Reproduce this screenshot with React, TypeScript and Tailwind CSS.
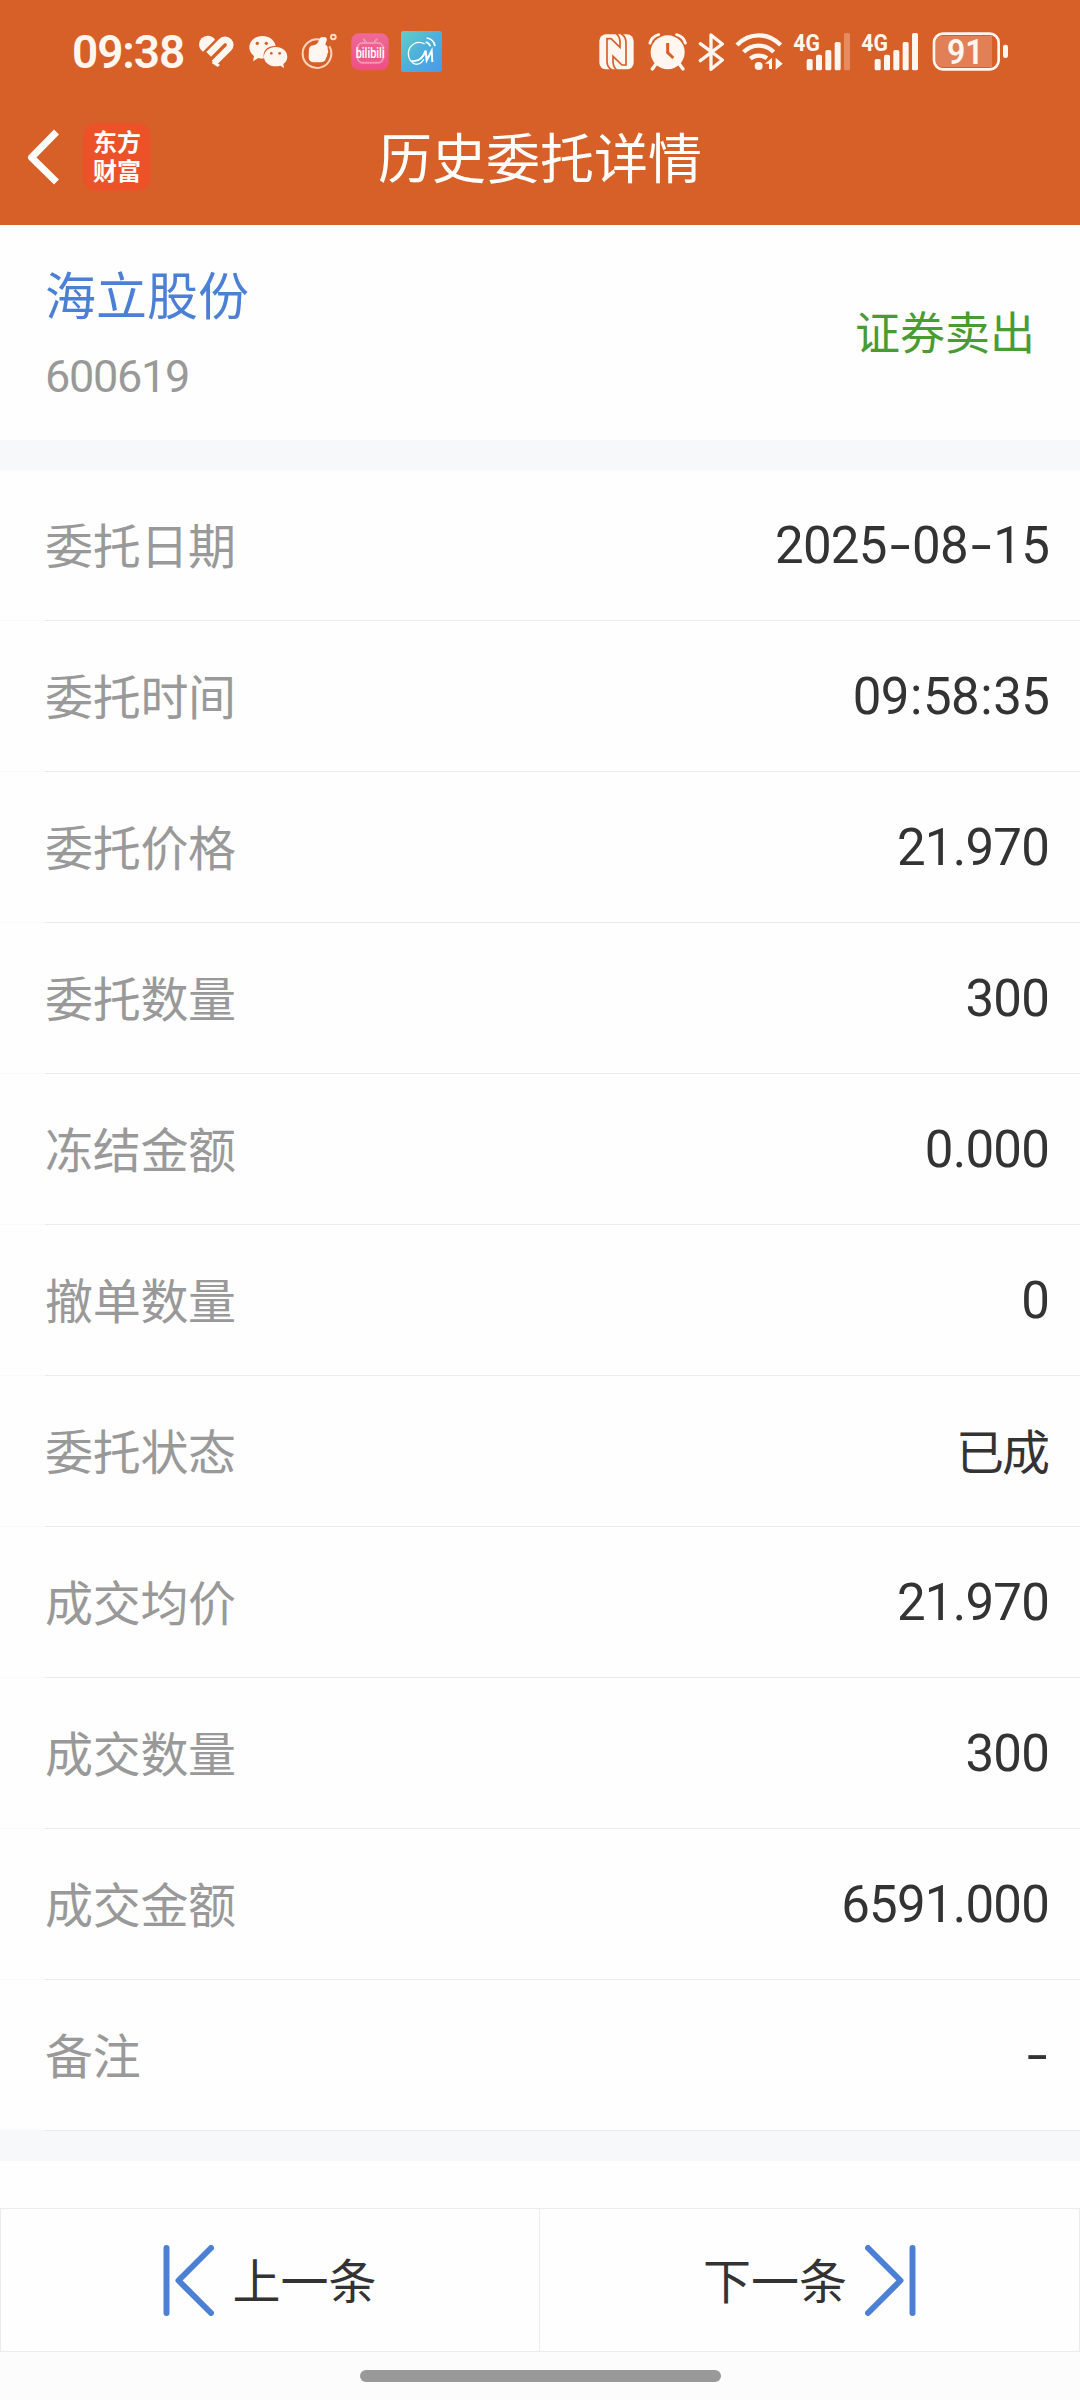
import React from "react";

const CREAM = "#fff6ef";

const HeartIcon = () => (
  <svg className="h-[34px] w-[38px]" viewBox="447 72 114 102" fill="none" stroke={CREAM}>
    <path d="M495 86A26 26 0 1 0 459 122Z" fill={CREAM} stroke="none" />
    <path d="M476 130L515.400 90.600A15 15 0 0 1 536.600 111.800L492 156" strokeWidth="20" />
    <path d="M485 156L492 149L510 162L503 168Z" fill={CREAM} stroke="none" />
  </svg>
);

const WechatIcon = () => (
  <svg className="h-[34px] w-[39px]" viewBox="598 73 117 102">
    <path d="M638 76C616 76 599 91 599 110C599 121 605 130 613 136L610 152L626 142C632 144 638 144 643 143C637 119 655 104 678 106C675 88 659 76 638 76Z" fill={CREAM} />
    <path d="M678 109C658 109 643 122 643 138C643 154 658 167 678 167C683 167 688 166 692 165L703 172L701 160C708 155 713 147 713 138C713 122 698 109 678 109Z" fill={CREAM} />
    <g fill="#d75f28"><circle cx="623" cy="98" r="5" /><circle cx="650" cy="98" r="5" /><circle cx="665" cy="128" r="4" /><circle cx="690" cy="128" r="4" /></g>
  </svg>
);

const ThumbIcon = () => (
  <svg className="h-[37px] w-[36px]" viewBox="754 70 108 111" fill="none">
    <path d="M812 90A43 43 0 1 0 839 110" stroke="#ffd5bd" strokeWidth="6" />
    <path d="M778 118Q780 108 792 107Q806 104 809 88Q812 80 827 83Q835 86 829 98L827 105Q836 109 834 118Q838 126 833 133Q834 141 829 145Q827 158 812 158H791Q777 156 777 142Z" fill={CREAM} />
    <circle cx="851" cy="82" r="7" stroke="#ffdcc8" strokeWidth="6" />
  </svg>
);

const BiliIcon = () => (
  <svg className="h-[38px] w-[38px] overflow-visible" viewBox="904 68 114 114">
    <defs>
      <linearGradient id="pink" x1="0" y1="0" x2="0" y2="1"><stop offset="0" stopColor="#ee6a97" /><stop offset="1" stopColor="#ef4f81" /></linearGradient>
    </defs>
    <rect x="905" y="69" width="112" height="111" rx="23" fill="url(#pink)" />
    <g fill="none" stroke="#f693b3" strokeWidth="6" strokeLinecap="round">
      <rect x="924" y="98" width="76" height="59" rx="14" />
      <path d="M942 87L950 97M981 87L973 97" />
    </g>
    <text x="918" y="142" fontSize="44" fontWeight="500" fill="#fff" textLength="87" lengthAdjust="spacingAndGlyphs" fontFamily="Roboto, sans-serif">bilibili</text>
  </svg>
);

const MLogo = () => (
  <svg className="h-[41px] w-[41px]" viewBox="1053 63 123 123" fill="none" stroke="#fff">
    <defs>
      <linearGradient id="aqua" x1="0" y1="0" x2="1" y2="1"><stop offset="0" stopColor="#63cfc3" /><stop offset=".5" stopColor="#4cb0dc" /><stop offset="1" stopColor="#4a99ea" /></linearGradient>
    </defs>
    <rect x="1053" y="63" width="123" height="123" rx="7" fill="url(#aqua)" stroke="none" />
    <path d="M1124 102C1103 90 1077 103 1075 129C1074 147 1085 160 1099 163" strokeWidth="4" />
    <path d="M1084 153C1106 156 1119 145 1127 122L1130 151L1145 122L1147 156" strokeWidth="6" />
    <path d="M1098 163C1110 163 1117 157 1121 148" strokeWidth="4" />
    <path d="M1127 96Q1138 99 1141 109M1130 84Q1151 87 1155 108" strokeWidth="5" />
  </svg>
);

const NfcIcon = () => (
  <svg className="h-[36px] w-[35px]" viewBox="58 71 105 108">
    <rect x="59" y="72" width="103" height="105" rx="20" fill={CREAM} />
    <g fill="none" stroke="#d75f28" strokeWidth="5">
      <path d="M97 179Q82 171 82 152V85H94L121 111V96Q121 80 110 70" />
      <path d="M124 70Q139 78 139 97V164H127L100 138V153Q100 169 111 179" />
    </g>
  </svg>
);

const AlarmIcon = () => (
  <svg className="h-[38px] w-[39px]" viewBox="204 67 117 114" fill="none" stroke={CREAM}>
    <circle cx="263" cy="125" r="51" fill={CREAM} stroke="none" />
    <path d="M228 160L217 175M298 160L309 175" strokeWidth="10" strokeLinecap="round" />
    <path d="M210 97Q215 78 236 72M316 97Q311 78 290 72" strokeWidth="9" strokeLinecap="round" />
    <path d="M263 97V126L280 142" stroke="#d75f28" strokeWidth="9" />
  </svg>
);

const BluetoothIcon = () => (
  <svg className="h-[38px] w-[27px]" viewBox="354 67 81 114" fill="none" stroke={CREAM} strokeWidth="10" strokeLinejoin="round" strokeLinecap="round">
    <path d="M361 99L427 148L393 176V73L427 100L361 150" />
  </svg>
);

const WifiIcon = () => (
  <svg className="h-[38px] w-[48px]" viewBox="466 65 144 114" fill="none" stroke={CREAM} strokeWidth="13">
    <path d="M472 101Q500 72 537 72T603 101M492 122Q511 103 537 103T582 122M512 142Q523 133 537 133Q551 133 562 141" />
    <circle cx="537" cy="164" r="12" fill={CREAM} stroke="none" />
    <path d="M556 157L577 139V173H568V157ZM588 139L609 157L588 175Z" fill={CREAM} stroke="none" />
  </svg>
);

const SignalIcon = ({ weak = false }: { weak?: boolean }) => (
  <svg className="h-[39px] w-[58px] overflow-visible" viewBox="640 63 174 117" fill={CREAM}>
    <text x="641" y="121" fontSize="73" fontWeight="700" textLength="80" lengthAdjust="spacingAndGlyphs" fontFamily="Roboto, sans-serif">4G</text>
    <rect x="681" y="144" width="18" height="34" rx="5" />
    <rect x="709" y="131" width="18" height="47" rx="5" />
    <rect x="737" y="117" width="18" height="61" rx="5" />
    <rect x="765" y="93" width="18" height="85" rx="5" />
    <rect x="793" y="66" width="18" height="112" rx="5" fill={weak ? "#e98b60" : CREAM} />
  </svg>
);

const BatteryIcon = () => (
  <svg className="h-[39px] w-[77px] overflow-visible" viewBox="1059 64 231 117">
    <path d="M1088 76H1239V169H1088Q1069 166 1069 146V98Q1069 78 1088 76Z" fill="#e18056" />
    <rect x="1065" y="69" width="194" height="107" rx="27" fill="none" stroke={CREAM} strokeWidth="8" />
    <rect x="1272" y="102" width="15" height="40" rx="7" fill={CREAM} />
    <text x="1104" y="159" fontSize="104" fontWeight="600" textLength="110" lengthAdjust="spacingAndGlyphs" fill={CREAM} fontFamily="Roboto, sans-serif">91</text>
  </svg>
);

const StatusBar = () => (
  <div className="flex h-[103px] items-center">
    <span className="ml-[72px] w-[127px] whitespace-nowrap font-[Roboto,sans-serif] text-[46px] leading-none font-semibold tracking-[-1.1px] text-[#fff6ef]">09:38</span>
    <HeartIcon />
    <div className="ml-[12px] flex"><WechatIcon /></div>
    <div className="ml-[13px] flex"><ThumbIcon /></div>
    <div className="ml-[14px] flex"><BiliIcon /></div>
    <div className="ml-[12px] flex"><MLogo /></div>
    <div className="ml-auto flex w-[481px] items-center">
      <NfcIcon />
      <div className="ml-[14px] flex"><AlarmIcon /></div>
      <div className="ml-[11px] flex"><BluetoothIcon /></div>
      <div className="ml-[10px] flex"><WifiIcon /></div>
      <div className="ml-[10px] flex"><SignalIcon weak /></div>
      <div className="ml-[10px] flex"><SignalIcon /></div>
      <div className="ml-[13px] flex"><BatteryIcon /></div>
    </div>
  </div>
);

const TitleBar = () => (
  <div className="grid h-[122px] grid-cols-[1fr_auto_1fr] items-start">
    <div className="flex items-center pt-[20px]">
      <svg className="ml-[26px] h-[56px] w-[34px]" viewBox="0 0 34 56" fill="none" stroke="#fff" strokeWidth="7">
        <path d="M30.500 3L5.500 28.500L30.500 53" strokeLinejoin="round" />
      </svg>
      <div className="ml-[23px] h-[68px] w-[68px] rounded-[14px] bg-[#eb5228] pt-[3px] text-center text-[24px] leading-[29px] font-bold text-white">
        东方<br />财富
      </div>
    </div>
    <h1 className="pt-[23px] text-[54px] leading-[60px] font-normal text-white">历史委托详情</h1>
    <div />
  </div>
);

const rows: [string, string][] = [
  ["委托日期", "2025-08-15"],
  ["委托时间", "09:58:35"],
  ["委托价格", "21.970"],
  ["委托数量", "300"],
  ["冻结金额", "0.000"],
  ["撤单数量", "0"],
  ["委托状态", "已成"],
  ["成交均价", "21.970"],
  ["成交数量", "300"],
  ["成交金额", "6591.000"],
  ["备注", "-"],
];

// Hyphens and colons sit in fixed cells, wider than the font's own.
const Value = ({ text }: { text: string }) => {
  if (text === "已成") return <span className="pr-[32px] pb-[5px] text-[48px] tracking-[-2px] text-[#333]">{text}</span>;
  return (
    <span className="pt-[2px] pr-[31px] font-[Roboto,sans-serif] text-[51px] tracking-[-0.8px] whitespace-nowrap text-[#333]">
      {text.split("").map((c, i) =>
        c === "-" ? (
          <span key={i} className="inline-block w-[25.5px] scale-x-[1.45] text-center">{c}</span>
        ) : c === ":" ? (
          <span key={i} className="inline-block w-[14.5px] text-center">{c}</span>
        ) : (
          <React.Fragment key={i}>{c}</React.Fragment>
        ),
      )}
    </span>
  );
};

export default function App() {
  return (
    <div className="flex h-[2400px] w-[1080px] flex-col overflow-hidden bg-[#fefefe] font-['Noto_Sans_CJK_SC',sans-serif]">
      <header className="h-[225px] shrink-0 bg-[#d75f28]">
        <StatusBar />
        <TitleBar />
      </header>

      <section className="flex h-[215px] shrink-0 items-start justify-between px-[45px]">
        <div>
          <div className="pt-[38px] text-[51px] leading-[60px] text-[#4c80d4]">海立股份</div>
          <div className="pt-[28px] font-[Roboto,sans-serif] text-[45px] leading-[52px] tracking-[-1.3px] text-[#999]">600619</div>
        </div>
        <div className="pt-[76px] text-[45px] leading-[60px] text-[#489c33]">证券卖出</div>
      </section>

      <div className="h-[30px] shrink-0 bg-[#f6f8fa]" />

      <dl className="shrink-0">
        {rows.map(([label, value]) => (
          <div key={label} className="flex h-[151px]">
            <div className="w-[45px] border-b border-[#f9f9f9]" />
            <div className="flex flex-1 items-center justify-between border-b border-[#ebebeb]">
              <dt className="pb-[5px] text-[48px] tracking-[-0.3px] text-[#999]">{label}</dt>
              <dd className="flex"><Value text={value} /></dd>
            </div>
          </div>
        ))}
      </dl>

      <div className="h-[30px] shrink-0 bg-[#f6f8fa]" />

      <nav className="mt-[47px] grid h-[144px] shrink-0 grid-cols-2 border border-[#ebebeb] text-[48px] text-[#333]">
        <button className="flex items-center justify-center gap-[18px] border-r border-[#ebebeb]">
          <svg className="h-[71px] w-[51px]" viewBox="0 0 51 71" fill="none" stroke="#4c80d4" strokeWidth="6" strokeLinecap="round" strokeLinejoin="round">
            <path d="M3.500 3V68M48 3L15.500 35.500L48 68" />
          </svg>
          <span className="pb-[5px]">上一条</span>
        </button>
        <button className="flex items-center justify-center gap-[18px]">
          <span className="pb-[5px]">下一条</span>
          <svg className="h-[71px] w-[51px]" viewBox="0 0 51 71" fill="none" stroke="#4c80d4" strokeWidth="6" strokeLinecap="round" strokeLinejoin="round">
            <path d="M47.500 3V68M3 3L35.500 35.500L3 68" />
          </svg>
        </button>
      </nav>

      <footer className="flex flex-1 justify-center bg-[#fcfcfc] pt-[18px]">
        <div className="h-[12px] w-[361px] rounded-full bg-[#999]" />
      </footer>
    </div>
  );
}
